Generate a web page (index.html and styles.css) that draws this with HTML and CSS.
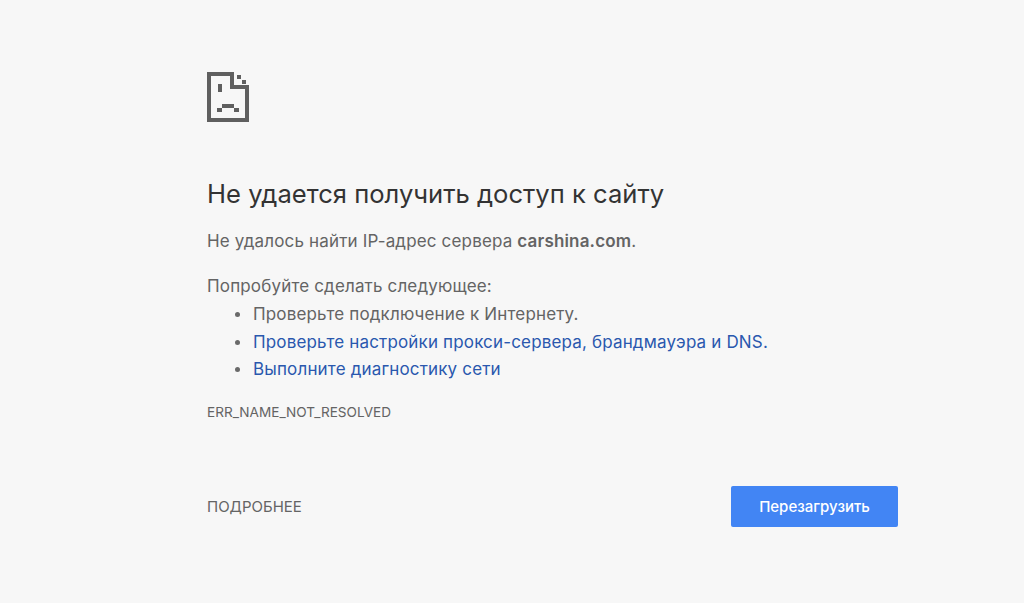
FILE: index.html
```html
<!DOCTYPE html>
<html lang="ru">
<head>
<meta charset="utf-8">
<title>carshina.com</title>
<link rel="stylesheet" href="styles.css">
</head>
<body>
<main class="page">
  <svg class="icon" width="42" height="50" viewBox="0 0 42 50" fill="#5f5f5f" shape-rendering="crispEdges">
    <path d="M0 0H27V4H4V46H38V17H42V50H0Z"/>
    <rect x="23" y="0" width="4" height="17"/>
    <rect x="23" y="13" width="19" height="4"/>
    <rect x="30" y="3" width="4" height="4"/>
    <rect x="35" y="8" width="4" height="4"/>
    <rect x="11" y="12" width="4" height="8"/>
    <rect x="15" y="32" width="12" height="4"/>
    <rect x="10" y="36" width="5" height="4"/>
    <rect x="27" y="36" width="5" height="4"/>
  </svg>
  <h1 class="title">Не удается получить доступ к сайту</h1>
  <p class="summary">Не удалось найти IP-адрес сервера <strong>carshina.com</strong>.</p>
  <p class="try">Попробуйте сделать следующее:</p>
  <ul class="tips">
    <li>Проверьте подключение к Интернету.</li>
    <li><a href="#">Проверьте настройки прокси-сервера, брандмауэра и DNS.</a></li>
    <li><a href="#">Выполните диагностику сети</a></li>
  </ul>
  <p class="code">ERR_NAME_NOT_RESOLVED</p>
  <div class="actions">
    <span class="details">ПОДРОБНЕЕ</span>
    <button class="reload">Перезагрузить</button>
  </div>
</main>
</body>
</html>
```
FILE: styles.css
```css
html, body { margin: 0; height: 100%; }
body {
  background: #f7f7f7;
  color: #646464;
  font-family: Inter, "Noto Sans", sans-serif;
  font-size: 17px;
  letter-spacing: 0.16px;
  overflow: hidden;
}
.page {
  width: 691px;
  margin-left: 207px;
  padding-top: 72px;
}
.icon { display: block; }
.title {
  margin: 55px 0 0;
  font-size: 25.6px;
  letter-spacing: 0;
  line-height: 34px;
  font-weight: 400;
  color: #333;
}
.summary { margin: 18px 0 0; line-height: 24px; }
.summary strong { font-weight: 600; }
.try { margin: 21px 0 0; line-height: 24px; }
.tips { margin: 3px 0 0; padding: 0 0 0 46px; list-style: none; }
.tips li { position: relative; line-height: 27.5px; }
.tips li::before {
  content: "";
  position: absolute;
  left: -18px;
  top: 11px;
  width: 5px;
  height: 5px;
  border-radius: 50%;
  background: #6a6a6a;
}
.tips a { color: #2a58ae; text-decoration: none; }
.code { margin: 18px 0 0; font-size: 13.6px; letter-spacing: 0; line-height: 20px; color: #646464; }
.actions {
  display: flex;
  justify-content: space-between;
  align-items: center;
  margin-top: 64.5px;
}
.details { font-size: 15px; letter-spacing: 0; color: #646464; }
.reload {
  width: 167px;
  height: 41px;
  border: 0;
  border-radius: 2px;
  background: #4285f4;
  color: #fff;
  font: 500 15px Inter, "Noto Sans", sans-serif;
}
```
